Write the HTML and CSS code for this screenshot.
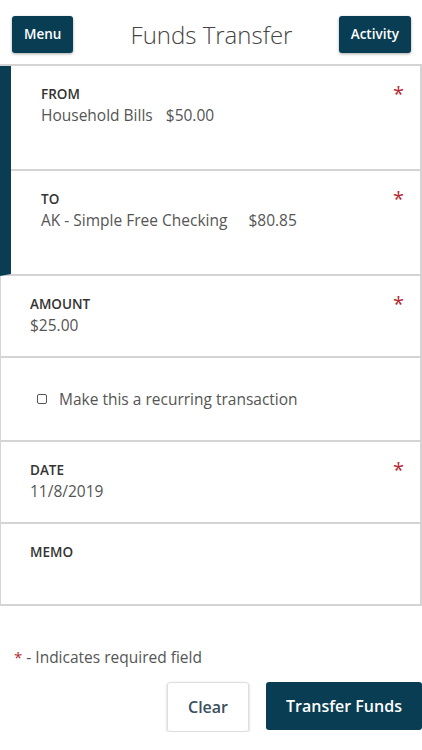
FILE: index.html
```html
<!doctype html>
<html lang="en">
<head>
  <meta charset="utf-8">
  <title>Funds Transfer</title>
  <link rel="stylesheet" href="styles.css">
</head>
<body>
  <div id="funds-transfer">
    <div class="top-bar">
      <a href="#" class="nav-button menu">Menu</a>
      <h1>Funds Transfer</h1>
      <a href="#" class="nav-button activity">Activity</a>
    </div>

    <form class="transfer-form">
      <div class="accounts">
        <div class="field account">
          <div class="field-head">
            <span class="caption">FROM</span>
            <span class="required">*</span>
          </div>
          <div class="value">
            <span>Household Bills</span>
            <span class="balance">$50.00</span>
          </div>
        </div>
        <div class="field account">
          <div class="field-head">
            <span class="caption">TO</span>
            <span class="required">*</span>
          </div>
          <div class="value">
            <span>AK - Simple Free Checking</span>
            <span class="balance wide">$80.85</span>
          </div>
        </div>
      </div>

      <div class="field">
        <div class="field-head">
          <span class="caption">AMOUNT</span>
          <span class="required">*</span>
        </div>
        <div class="value">$25.00</div>
      </div>

      <label class="field recurring">
        <span class="check-box"></span>
        Make this a recurring transaction
      </label>

      <div class="field">
        <div class="field-head">
          <span class="caption">DATE</span>
          <span class="required">*</span>
        </div>
        <div class="value">11/8/2019</div>
      </div>

      <div class="field memo">
        <div class="field-head">
          <span class="caption">MEMO</span>
        </div>
      </div>
    </form>

    <p class="required-note"><span class="required">*</span> - Indicates required field</p>

    <div class="controls">
      <a href="#" class="clear">Clear</a>
      <a href="#" class="submit">Transfer Funds</a>
    </div>
  </div>
</body>
</html>
```

FILE: styles.css
```css
body {
  --brand: #083d53;
  --line: #d4d4d4;
  margin: 0;
  font-family: "Open Sans", sans-serif;
  color: #555;
  background: #fff;
}
#funds-transfer {
  width: 422px;
}

.top-bar {
  display: grid;
  grid-template-columns: 1fr auto 1fr;
  align-items: center;
  padding: 16px 11px 11px 12px;
}
.top-bar h1 {
  margin: 0;
  font-size: 24px;
  font-weight: 300;
  color: #444;
  line-height: 37px;
}
.nav-button {
  height: 37px;
  line-height: 36px;
  padding: 0 12px;
  background: var(--brand);
  color: #fff;
  font-size: 13.5px;
  font-weight: 600;
  text-decoration: none;
  border-radius: 3px;
  box-shadow: 0 1px 3px rgba(0, 0, 0, 0.35);
}
.menu {
  justify-self: start;
}
.activity {
  justify-self: end;
}

.transfer-form {
  border-top: 2px solid var(--line);
  border-right: 2px solid var(--line);
}
.accounts {
  border-left: 11px solid var(--brand);
  border-bottom: 2px solid var(--line);
}
.field {
  display: block;
  border-left: 1px solid var(--line);
  border-bottom: 2px solid var(--line);
  padding: 19px 16px 20px 29px;
}
.accounts .field {
  border-left: none;
  padding-left: 30px;
  padding-bottom: 43px;
}
.accounts .field:last-child {
  border-bottom: none;
}
.field-head {
  display: flex;
  justify-content: space-between;
  line-height: 18px;
  height: 19px;
}
.caption {
  font-size: 13.5px;
  font-weight: 600;
  color: #333;
}
.required {
  color: #b8262e;
  font-size: 20px;
}
.field-head .required {
  line-height: 16px;
  margin-top: 1px;
}
.value {
  font-size: 15.5px;
  line-height: 22px;
}
.balance {
  margin-left: 9px;
}
.balance.wide {
  margin-left: 17px;
}

.recurring {
  display: flex;
  align-items: center;
  gap: 12px;
  padding: 31px 17px 31px 36px;
  font-size: 15.5px;
  line-height: 20px;
}
.check-box {
  width: 8px;
  height: 8px;
  border: 1px solid #555;
  border-radius: 2px;
}
.memo {
  padding-bottom: 42px;
}

.required-note {
  margin: 41px 0 0 14px;
  font-size: 15.5px;
  line-height: 20px;
}
.required-note .required {
  font-size: 15px;
}

.controls {
  display: flex;
  justify-content: flex-end;
  gap: 17px;
  margin-top: 15px;
}
.controls a {
  display: block;
  height: 48px;
  line-height: 48px;
  border-radius: 3px;
  font-size: 16px;
  font-weight: 600;
  text-decoration: none;
  text-align: center;
}
.clear {
  width: 80px;
  border: 1px solid #ddd;
  color: #3b4f5c;
  box-shadow: 0 1px 3px rgba(0, 0, 0, 0.2);
  line-height: 46px;
}
.submit {
  width: 156px;
  background: var(--brand);
  color: #fff;
  border-radius: 3px 0 0 3px;
}
```
